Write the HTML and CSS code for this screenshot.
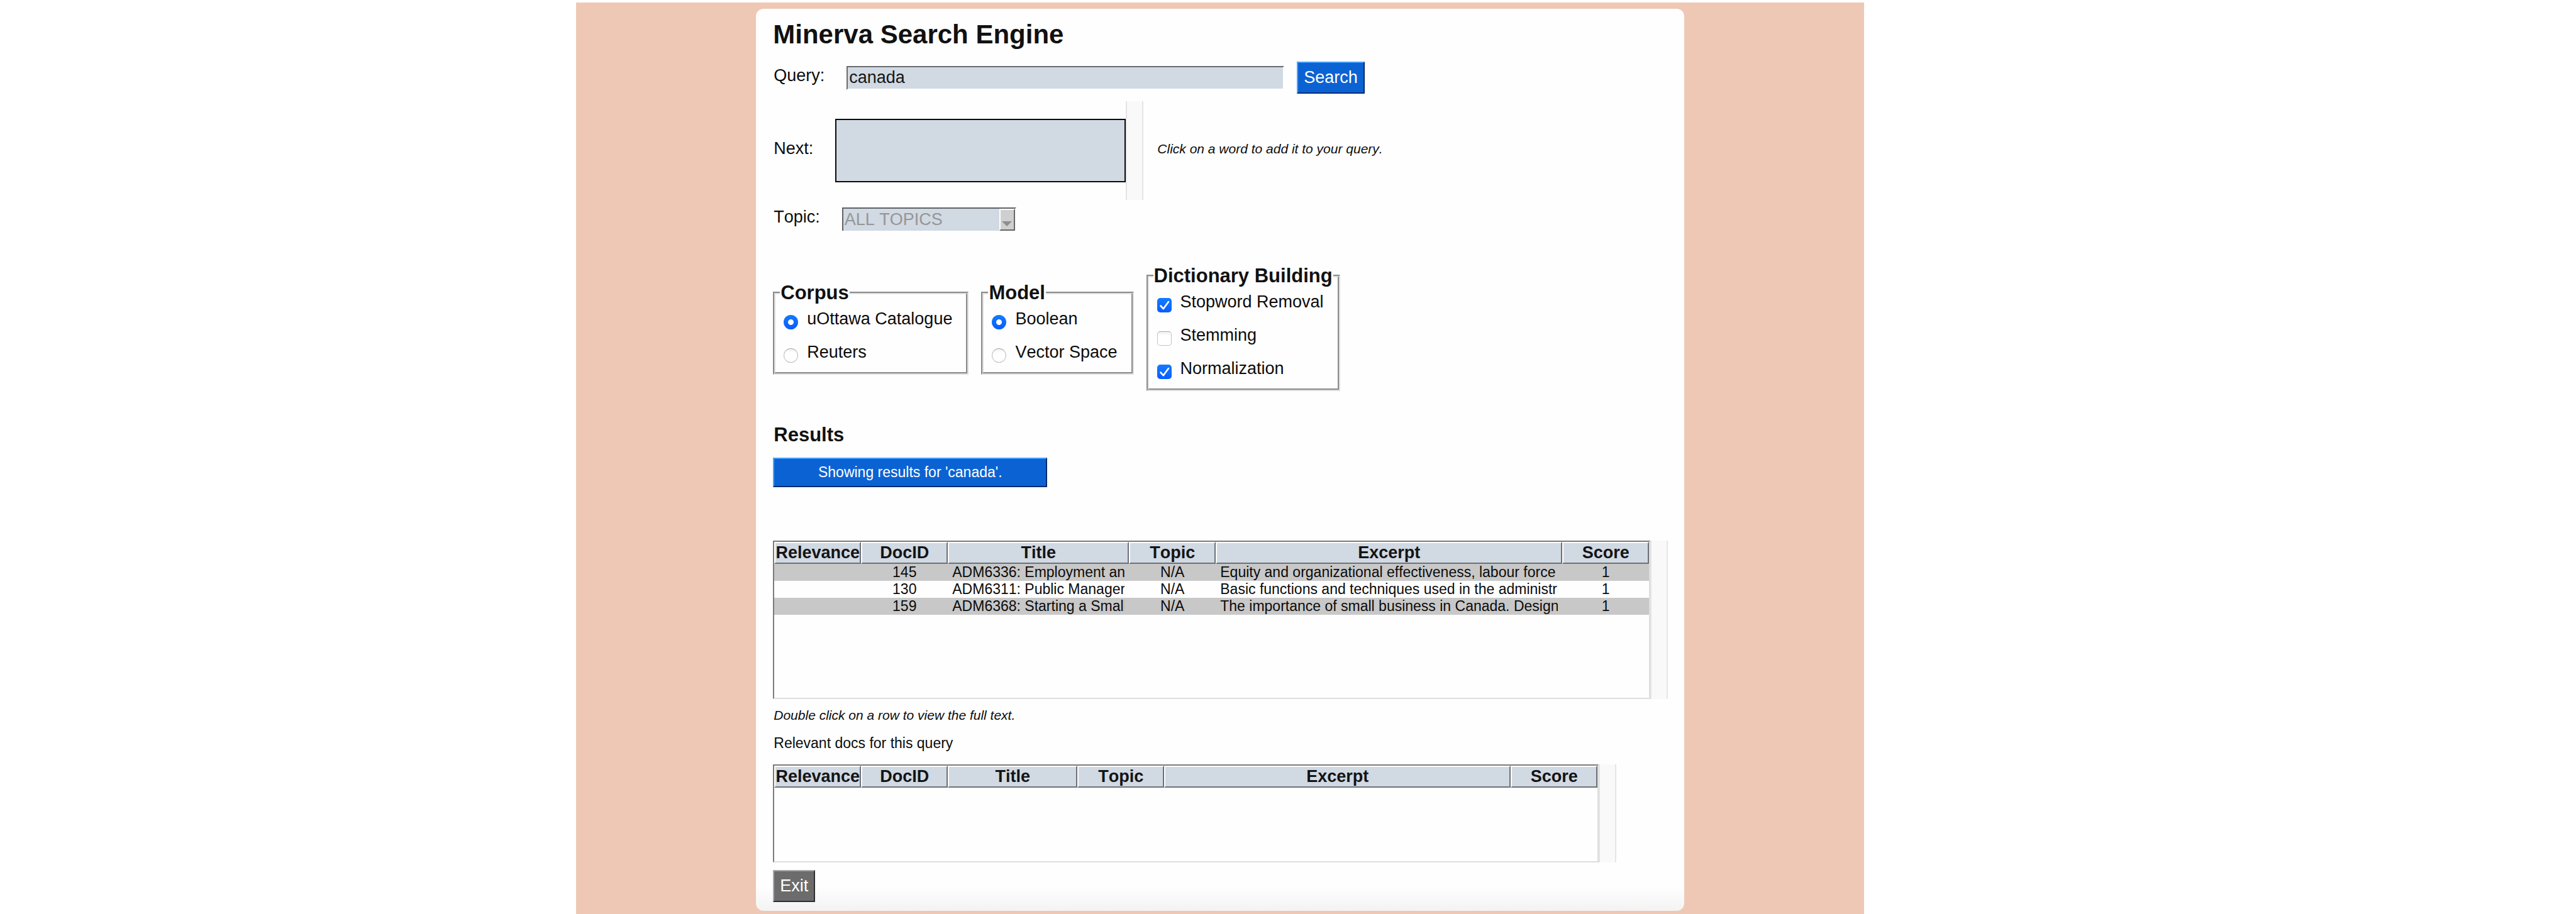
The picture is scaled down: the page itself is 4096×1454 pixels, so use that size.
FILE: index.html
```html
<!DOCTYPE html>
<html lang="en">
<head>
<meta charset="utf-8">
<title>Minerva Search Engine</title>
<link rel="stylesheet" href="styles.css">
</head>
<body>
<div class="backdrop">
  <main class="panel">
    <h1 class="title">Minerva Search Engine</h1>

    <form class="search-form">
      <div class="row">
        <label class="row-label" for="query">Query:</label>
        <div class="query-group">
          <input class="entry" id="query" type="text" value="canada">
          <button class="button button-primary" type="button">Search</button>
        </div>
      </div>

      <div class="row">
        <label class="row-label" for="next">Next:</label>
        <div class="next-group">
          <select class="word-list" id="next" size="3"></select>
          <div class="scrollbar"></div>
        </div>
        <p class="hint hint-inline">Click on a word to add it to your query.</p>
      </div>

      <div class="row">
        <label class="row-label" for="topic">Topic:</label>
        <div class="combo">
          <select class="combo-select" id="topic" disabled>
            <option>ALL TOPICS</option>
          </select>
          <span class="combo-arrow" aria-hidden="true">
            <svg width="16" height="8" viewBox="0 0 16 8"><path d="M0 0H16L8 8Z" fill="#8e8e8e"/></svg>
          </span>
        </div>
      </div>

      <div class="options">
        <fieldset class="group">
          <legend class="heading group-title">Corpus</legend>
          <label class="choice"><input class="radio" type="radio" name="corpus" checked><span class="choice-text">uOttawa Catalogue</span></label>
          <label class="choice"><input class="radio" type="radio" name="corpus"><span class="choice-text">Reuters</span></label>
        </fieldset>
        <fieldset class="group">
          <legend class="heading group-title">Model</legend>
          <label class="choice"><input class="radio" type="radio" name="model" checked><span class="choice-text">Boolean</span></label>
          <label class="choice"><input class="radio" type="radio" name="model"><span class="choice-text">Vector Space</span></label>
        </fieldset>
        <fieldset class="group">
          <legend class="heading group-title">Dictionary Building</legend>
          <label class="choice">
            <span class="check"><input class="check-input" type="checkbox" checked><svg class="check-mark" viewBox="0 0 23 23"><path d="M5.5 12.5L9.8 17.2L18 6"/></svg></span>
            <span class="choice-text">Stopword Removal</span>
          </label>
          <label class="choice">
            <span class="check"><input class="check-input" type="checkbox"></span>
            <span class="choice-text">Stemming</span>
          </label>
          <label class="choice">
            <span class="check"><input class="check-input" type="checkbox" checked><svg class="check-mark" viewBox="0 0 23 23"><path d="M5.5 12.5L9.8 17.2L18 6"/></svg></span>
            <span class="choice-text">Normalization</span>
          </label>
        </fieldset>
      </div>
    </form>

    <h2 class="heading results-title">Results</h2>
    <button class="button button-primary status" type="button">Showing results for 'canada'.</button>

    <div class="table-area results-area">
      <div class="table-frame">
        <table class="docs">
          <colgroup>
            <col class="col-narrow"><col class="col-narrow"><col class="col-title-wide"><col class="col-narrow"><col class="col-excerpt"><col class="col-narrow">
          </colgroup>
          <thead>
            <tr><th>Relevance</th><th>DocID</th><th>Title</th><th>Topic</th><th>Excerpt</th><th>Score</th></tr>
          </thead>
          <tbody>
            <tr><td></td><td>145</td><td class="text-cell"><div class="clip">ADM6336: Employment an</div></td><td>N/A</td><td class="text-cell"><div class="clip">Equity and organizational effectiveness, labour force</div></td><td>1</td></tr>
            <tr><td></td><td>130</td><td class="text-cell"><div class="clip">ADM6311: Public Manager</div></td><td>N/A</td><td class="text-cell"><div class="clip">Basic functions and techniques used in the administra</div></td><td>1</td></tr>
            <tr><td></td><td>159</td><td class="text-cell"><div class="clip">ADM6368: Starting a Small</div></td><td>N/A</td><td class="text-cell"><div class="clip">The importance of small business in Canada. Design</div></td><td>1</td></tr>
          </tbody>
        </table>
      </div>
      <div class="scrollbar"></div>
    </div>

    <p class="hint hint-below">Double click on a row to view the full text.</p>
    <p class="caption">Relevant docs for this query</p>

    <div class="table-area relevant-area">
      <div class="table-frame">
        <table class="docs">
          <colgroup>
            <col class="col-narrow"><col class="col-narrow"><col class="col-title"><col class="col-narrow"><col class="col-excerpt"><col class="col-narrow">
          </colgroup>
          <thead>
            <tr><th>Relevance</th><th>DocID</th><th>Title</th><th>Topic</th><th>Excerpt</th><th>Score</th></tr>
          </thead>
        </table>
      </div>
      <div class="scrollbar"></div>
    </div>

    <button class="button button-exit" type="button">Exit</button>
  </main>
</div>
</body>
</html>
```
FILE: styles.css
```css
* {
  box-sizing: border-box;
}

body {
  margin: 0;
  padding-top: 4px;
  background: #fff;
  color: #0c0c0c;
  font: 27px/31px "Liberation Sans", Arial, sans-serif;
  font-kerning: none;
  display: grid;
  grid-template-columns: 2237fr 5000fr 2763fr;
}

.backdrop {
  grid-column: 2;
  min-height: calc(100vh - 4px);
  padding: 10px 0 5px;
  background: #eec8b4;
}

.panel {
  max-width: 1476px;
  margin: 0 auto;
  padding: 17px 26px 14px 27px;
  border-radius: 12px;
  background: linear-gradient(to top, #f3f3f4, #fefefe 38px);
}

.title,
.heading,
.hint,
.caption {
  margin: 0;
}

.title {
  font-size: 42px;
  line-height: 48px;
  color: #111;
}

.heading {
  font-size: 31px;
  line-height: 36px;
  font-weight: bold;
  color: #111;
}

/* search form */

.search-form {
  margin-top: 19px;
}

.row {
  display: flex;
  align-items: center;
}

.row + .row {
  margin-top: 12px;
}

.row-label {
  padding: 0 0 6px 1px;
  margin-right: 35px;
}

.query-group {
  display: flex;
  align-items: center;
  gap: 20px;
}

.entry {
  width: 696px;
  height: 38px;
  padding: 0 2px;
  border: 2px solid #fff;
  border-top-color: #686b70;
  border-left-color: #686b70;
  background: #d1d9e3;
  background-clip: padding-box;
  color: #161616;
  font: inherit;
}

.button {
  height: 51px;
  padding: 0 9px;
  border: 2px solid;
  color: #fff;
  font: inherit;
}

.button-primary {
  border-color: #4aa3ff #052a70 #052a70 #4aa3ff;
  background: #0b63d3;
}

.button-exit {
  display: block;
  margin-top: 12px;
  border-color: #a8a8a8 #2f2f2f #2f2f2f #a8a8a8;
  background: #6c6c6c;
}

.next-group {
  display: flex;
  align-items: center;
  height: 157px;
}

.word-list {
  width: 462px;
  height: 101px;
  border: 2px solid #0a0a0a;
  border-radius: 0;
  background: #d1d9e3;
  font: inherit;
  overflow: hidden;
}

.scrollbar {
  align-self: stretch;
  width: 28px;
  border-left: 2px solid #e4e4e4;
  border-right: 2px solid #e6e6e6;
  background: #f9f9f9;
}

.hint {
  font-size: 21px;
  line-height: 24px;
  font-style: italic;
}

.hint-inline {
  margin-left: 22px;
  padding-bottom: 6px;
}

.combo {
  display: flex;
  width: 277px;
  height: 37px;
  border-top: 2px solid #5f6266;
  border-left: 2px solid #5f6266;
  border-right: 2px solid #fff;
  background: #d1d9e3;
}

.combo-select {
  flex: 1;
  appearance: none;
  padding: 0 2px;
  border: 0;
  border-radius: 0;
  background: transparent;
  color: #969696;
  opacity: 1;
  font: inherit;
}

.combo-arrow {
  display: flex;
  align-items: flex-end;
  justify-content: center;
  width: 25px;
  padding-bottom: 5px;
  border: 2px solid #fff;
  border-right-color: #666;
  border-bottom-color: #666;
  background: #cfcfcf;
}

/* option groups */

.options {
  display: flex;
  align-items: center;
  gap: 20px;
  margin-top: 54px;
}

.group {
  margin: 0;
  padding: 0 7px 2px;
  border: 4px groove #dedede;
}

.group-title {
  padding: 0 1px;
}

.choice {
  display: flex;
  align-items: center;
  gap: 14px;
  height: 53px;
  padding: 4px 15px 0 6px;
}

.choice-text {
  padding-bottom: 10px;
}

.radio,
.check-input {
  appearance: none;
  width: 23px;
  height: 23px;
  margin: 0;
  border: 1px solid #c2c2c2;
  border-top-color: #acacac;
  background: linear-gradient(#f0f0f0, #fff 6px);
}

.radio {
  border-radius: 50%;
}

.check-input {
  border-radius: 5px;
}

.radio:checked {
  border: 0;
  background: radial-gradient(circle, #fff 4px, transparent 5px), linear-gradient(#127cff, #0a5cff);
}

.check-input:checked {
  border: 0;
  background: linear-gradient(#127cff, #0a5cff);
}

.check {
  display: grid;
}

.check > * {
  grid-area: 1 / 1;
}

.check-mark {
  width: 23px;
  height: 23px;
  fill: none;
  stroke: #fff;
  stroke-width: 2.6;
  stroke-linecap: round;
  stroke-linejoin: round;
  pointer-events: none;
}

/* results */

.results-title {
  margin-top: 52px;
  padding-left: 1px;
}

.status {
  display: block;
  width: 436px;
  height: 47px;
  margin-top: 18px;
  font-size: 23px;
}

.table-area {
  display: flex;
}

.results-area {
  height: 252px;
  margin-top: 85px;
}

.relevant-area {
  height: 156px;
  margin-top: 20px;
}

.table-frame {
  border: 2px solid #dedede;
  border-top-color: #7b7b7b;
  border-left-color: #7b7b7b;
}

.docs {
  width: 0;
  table-layout: fixed;
  border-collapse: separate;
  border-spacing: 0;
  font-size: 23px;
  line-height: 27px;
}

.col-narrow {
  width: 138px;
}

.col-title {
  width: 206px;
}

.col-title-wide {
  width: 288px;
}

.col-excerpt {
  width: 551px;
}

.docs th {
  padding: 0;
  border: 2px solid #fff;
  border-right-color: #6d7177;
  border-bottom-color: #6d7177;
  background: #d1d9e3;
  color: #141414;
  font-size: 27px;
  line-height: 31px;
}

.docs td {
  padding: 0;
  text-align: center;
}

.docs .text-cell {
  padding: 0 7px;
  text-align: left;
}

.clip {
  overflow: hidden;
  white-space: nowrap;
}

.docs tbody tr:nth-child(odd) {
  background: #c8c8c8;
}

.hint-below {
  margin-top: 14px;
  padding-left: 1px;
}

.caption {
  margin-top: 19px;
  padding-left: 1px;
  font-size: 23px;
  line-height: 27px;
}
```
